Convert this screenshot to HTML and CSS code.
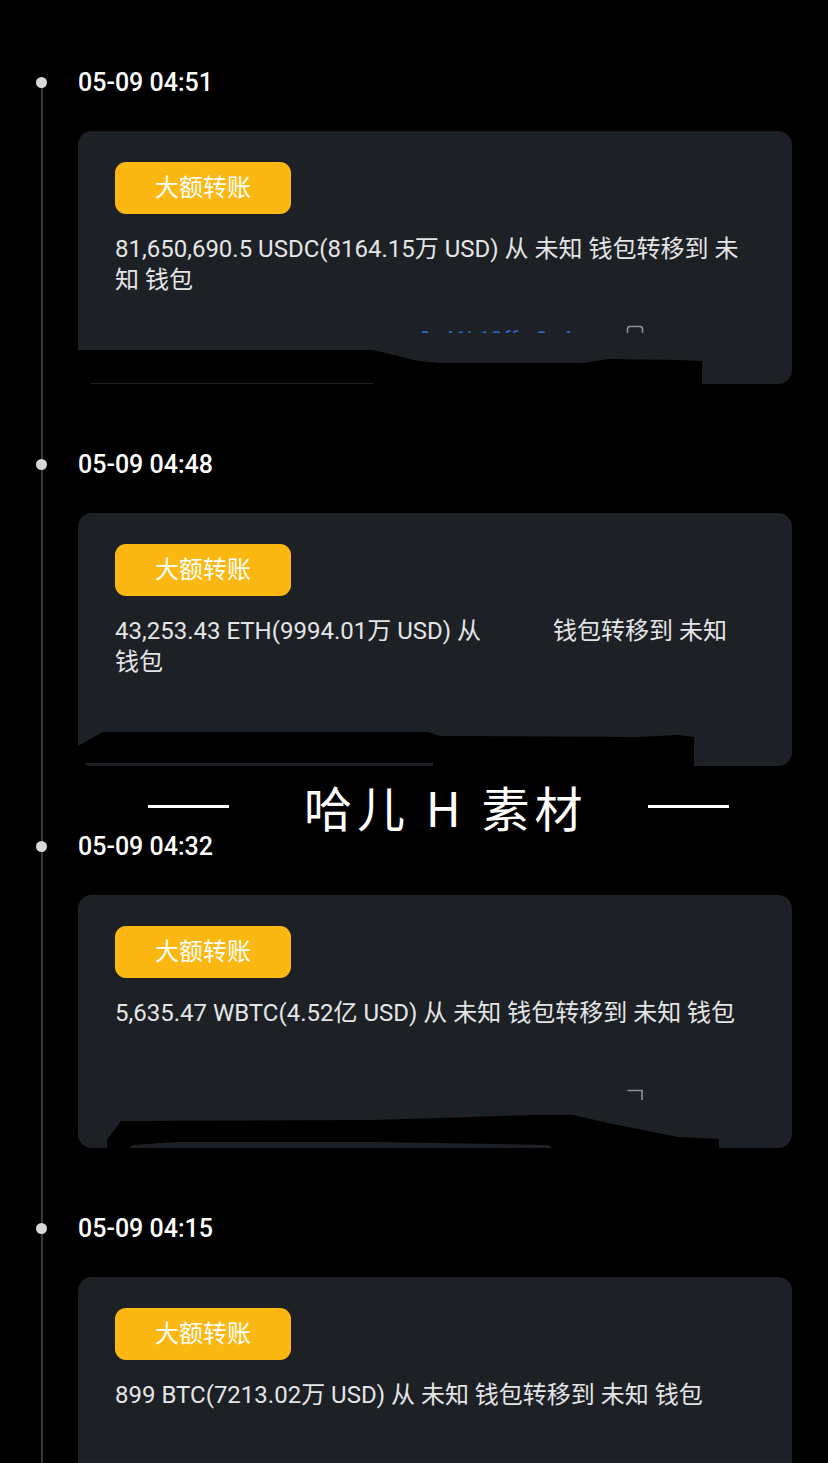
FILE: index.html
```html
<!DOCTYPE html>
<html lang="zh-CN">
<head>
    <meta charset="UTF-8">
    <meta name="viewport" content="width=device-width, initial-scale=1.0">
    <title>大额转账</title>
    <link rel="stylesheet" href="styles.css">
</head>
<body>
    <div class="page">
        <div class="timeline">
            <section class="entry">
                <div class="entry-head"><span class="dot"></span><span class="time">05-09 04:51</span></div>
                <div class="card">
                    <div class="tag">大额转账</div>
                    <p class="desc">81,650,690.5 USDC(8164.15万 USD) 从 未知 钱包转移到 未知 钱包</p>
                    <div class="addr-row">
                        <span class="addr">0x41k13ff...0a4ll</span>
                        <svg class="copy" width="18" height="12" viewBox="0 0 18 12"><path d="M1.5 11V4Q1.5 1.5 4 1.5H14Q16.5 1.5 16.5 4V11" fill="none" stroke="#8b9099" stroke-width="1.6"/></svg>
                    </div>
                    <svg class="scribble" width="714" height="262" viewBox="0 0 714 262"><path d="M0 219H295L312 223L340 230L362 232H505L530 228L600 229L624 230V262H295V252H13V262H0Z" fill="#000"/></svg>
                </div>
            </section>

            <section class="entry">
                <div class="entry-head"><span class="dot"></span><span class="time">05-09 04:48</span></div>
                <div class="card">
                    <div class="tag">大额转账</div>
                    <p class="desc">43,253.43 ETH(9994.01万 USD) 从<span class="blank"></span>钱包转移到 未知 钱包</p>
                    <svg class="scribble" width="714" height="262" viewBox="0 0 714 262"><path d="M25 219H350L362 223L560 224L600 222L616 224V262H355V250H6V262H0V233Z" fill="#000"/></svg>
                </div>
            </section>

            <section class="entry">
                <div class="entry-head"><span class="dot"></span><span class="time">05-09 04:32</span></div>
                <div class="card">
                    <div class="tag">大额转账</div>
                    <p class="desc">5,635.47 WBTC(4.52亿 USD) 从 未知 钱包转移到 未知 钱包</p>
                    <div class="addr-row addr-row--tall">
                        <svg class="copy copy--solo" width="18" height="12" viewBox="0 0 18 12"><path d="M1.5 1.5H16V11" fill="none" stroke="#8b9099" stroke-width="1.6"/></svg>
                    </div>
                    <svg class="scribble" width="714" height="262" viewBox="0 0 714 262"><path d="M43 226L295 225L458 220H495L530 228L570 236L600 242L641 244V262H490L470 250L300 247H100L55 250L40 262H29V245Z" fill="#000"/></svg>
                </div>
            </section>

            <section class="entry">
                <div class="entry-head"><span class="dot"></span><span class="time">05-09 04:15</span></div>
                <div class="card">
                    <div class="tag">大额转账</div>
                    <p class="desc">899 BTC(7213.02万 USD) 从 未知 钱包转移到 未知 钱包</p>
                </div>
            </section>
        </div>

        <div class="watermark">
            <span class="dash"></span>
            <span class="mark-text">哈儿 H 素材</span>
            <span class="dash"></span>
        </div>
    </div>
</body>
</html>
```

FILE: styles.css
```css
body {
    margin: 0;
    background-color: #000;
    font-family: Roboto, "Noto Sans CJK SC", sans-serif;
    color: #fff;
}
.page {
    position: relative;
    height: 1463px;
    overflow: hidden;
}
.timeline {
    position: relative;
    padding-top: 62px;
}
.timeline::before {
    content: "";
    position: absolute;
    left: 41px;
    top: 82px;
    bottom: 0;
    width: 2px;
    background-color: #3a3a3a;
}
.entry {
    margin-bottom: 60px;
}
.entry-head {
    display: flex;
    align-items: center;
    height: 40px;
}
.dot {
    position: relative;
    width: 11px;
    height: 11px;
    margin-left: 36px;
    border-radius: 50%;
    background-color: #d8d8d8;
}
.time {
    margin-left: 31px;
    font-size: 25px;
    font-weight: 500;
    color: #fff;
}
.card {
    position: relative;
    display: flex;
    flex-direction: column;
    align-items: flex-start;
    box-sizing: border-box;
    width: 714px;
    height: 253px;
    margin: 29px 0 0 78px;
    padding: 31px 37px 0;
    border-radius: 14px;
    background-color: #1d2024;
}
.tag {
    width: 176px;
    height: 52px;
    line-height: 52px;
    border-radius: 11px;
    background-color: #fcb812;
    color: #fff;
    font-size: 24px;
    text-align: center;
}
.desc {
    margin: 20px 0 0;
    font-size: 24px;
    line-height: 31px;
    color: #e4e5e7;
}
.blank {
    display: inline-block;
    width: 72px;
}
.addr-row {
    display: flex;
    align-items: flex-start;
    height: 8px;
    margin-top: auto;
    margin-bottom: 51px;
    overflow: hidden;
}
.addr-row--tall {
    height: 11px;
    margin-bottom: 48px;
}
.addr {
    width: 154px;
    margin-left: 304px;
    overflow: hidden;
    white-space: nowrap;
    font-size: 22px;
    line-height: 30px;
    color: #2a66c4;
}
.copy {
    display: block;
    margin-left: 53px;
}
.copy--solo {
    margin-left: 511px;
}
.scribble {
    position: absolute;
    left: 0;
    top: 0;
}
.watermark {
    position: absolute;
    left: 148px;
    top: 776px;
    display: flex;
    align-items: center;
    height: 60px;
}
.dash {
    width: 81px;
    height: 3px;
    background-color: #fff;
}
.mark-text {
    margin: 0 61px 0 75px;
    font-family: "Noto Sans CJK SC", sans-serif;
    font-size: 48px;
    font-weight: 400;
    letter-spacing: 5px;
    line-height: 60px;
    color: #fff;
}
```
